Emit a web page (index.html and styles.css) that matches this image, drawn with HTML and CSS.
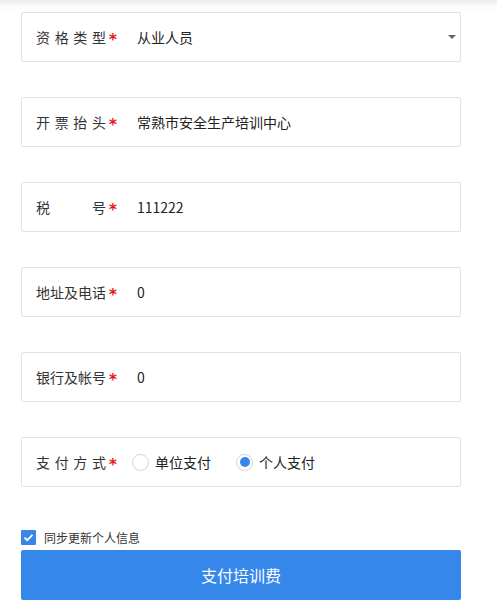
FILE: index.html
```html
<!DOCTYPE html>
<html lang="zh">
<head>
<meta charset="utf-8">
<link rel="stylesheet" href="styles.css">
</head>
<body>
<div class="page">
  <div class="form">
    <div class="field">
      <div class="label"><span>资</span><span>格</span><span>类</span><span>型</span></div>
      <span class="star">*</span>
      <div class="value">从业人员</div>
      <span class="caret"></span>
    </div>
    <div class="field">
      <div class="label"><span>开</span><span>票</span><span>抬</span><span>头</span></div>
      <span class="star">*</span>
      <div class="value">常熟市安全生产培训中心</div>
    </div>
    <div class="field">
      <div class="label"><span>税</span><span>号</span></div>
      <span class="star">*</span>
      <div class="value">111222</div>
    </div>
    <div class="field">
      <div class="label"><span>地</span><span>址</span><span>及</span><span>电</span><span>话</span></div>
      <span class="star">*</span>
      <div class="value">0</div>
    </div>
    <div class="field">
      <div class="label"><span>银</span><span>行</span><span>及</span><span>帐</span><span>号</span></div>
      <span class="star">*</span>
      <div class="value">0</div>
    </div>
    <div class="field">
      <div class="label"><span>支</span><span>付</span><span>方</span><span>式</span></div>
      <span class="star">*</span>
      <div class="radios">
        <label class="radio"><span class="dot"></span>单位支付</label>
        <label class="radio checked"><span class="dot"></span>个人支付</label>
      </div>
    </div>
  </div>
  <div class="sync">
    <span class="check"><svg width="11" height="9" viewBox="0 0 11 9"><path d="M1.5 4.6 L4.2 7.2 L9.5 1.8" fill="none" stroke="#fff" stroke-width="1.8"/></svg></span>
    <span class="sync-text">同步更新个人信息</span>
  </div>
  <div class="btn">支付培训费</div>
</div>
</body>
</html>
```
FILE: styles.css
```css
html, body {
  margin: 0;
  padding: 0;
  background: #fff;
}
body {
  font-family: "Noto Sans CJK SC", "Noto Sans", sans-serif;
  color: #333;
  background: linear-gradient(to bottom, #ececec 0px, #fafafa 6px, #fff 12px) no-repeat;
  background-size: 100% 12px;
  min-height: 615px;
}
.page {
  padding: 12px 36px 0 21px;
}
.form {
  display: flex;
  flex-direction: column;
  gap: 35px;
}
.field {
  position: relative;
  height: 48px;
  border: 1px solid #e3e3e3;
  border-radius: 2px;
  display: flex;
  align-items: center;
  padding-left: 14px;
  font-size: 14px;
}
.label {
  width: 70px;
  display: flex;
  justify-content: space-between;
  color: #333;
  line-height: 20px;
}
.star {
  color: #e01818;
  width: 31px;
  font-family: "DejaVu Sans", sans-serif;
  font-weight: bold;
  font-size: 15px;
  padding-left: 3px;
  box-sizing: border-box;
  line-height: 20px;
  position: relative;
  top: 3px;
}
.value {
  color: #222;
  line-height: 20px;
}
.caret {
  position: absolute;
  right: 4px;
  top: 22px;
  width: 0;
  height: 0;
  border-left: 4px solid transparent;
  border-right: 4px solid transparent;
  border-top: 4px solid #666;
}
.radios {
  display: flex;
  gap: 25px;
  margin-left: -5px;
}
.radio {
  display: flex;
  align-items: center;
  gap: 6px;
  color: #222;
  font-size: 14px;
}
.dot {
  width: 15px;
  height: 15px;
  border: 1px solid #d4d4d4;
  border-radius: 50%;
  box-sizing: content-box;
  position: relative;
  background: #fff;
}
.radio.checked .dot::after {
  content: "";
  position: absolute;
  left: 2.5px;
  top: 2.5px;
  width: 10px;
  height: 10px;
  border-radius: 50%;
  background: #3a86e8;
}
.sync {
  margin-top: 42px;
  display: flex;
  align-items: center;
  gap: 8px;
  height: 16px;
}
.check {
  width: 15px;
  height: 15px;
  background: #3a86e8;
  border-radius: 1px;
  display: flex;
  align-items: center;
  justify-content: center;
}
.sync-text {
  font-size: 12px;
  color: #333;
}
.btn {
  margin-top: 5px;
  height: 50px;
  background: #3687ea;
  color: #fff;
  border-radius: 2px;
  display: flex;
  align-items: center;
  justify-content: center;
  font-size: 16px;
}
```
